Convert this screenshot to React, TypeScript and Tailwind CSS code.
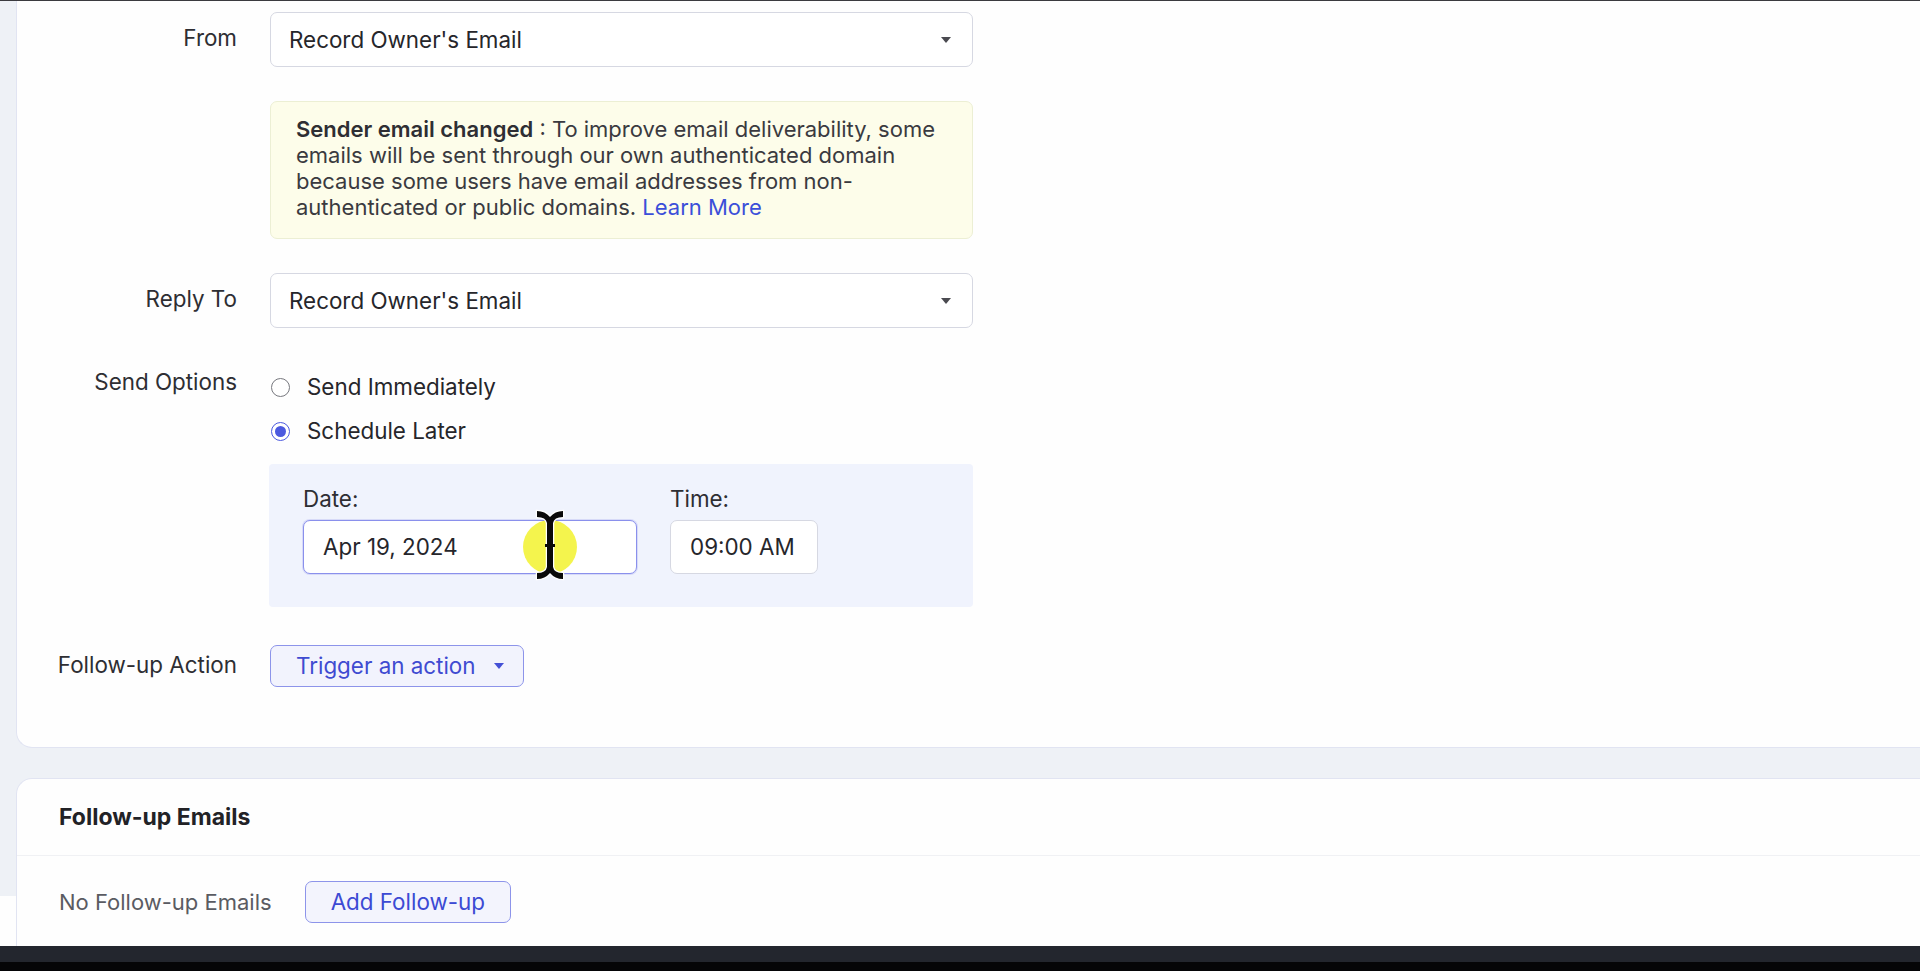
import React from "react"

function Caret({ className = "" }: { className?: string }) {
  return (
    <svg width="10" height="6" viewBox="0 0 10 6" className={className}>
      <path d="M0 0 L10 0 L5 6 Z" fill="currentColor" />
    </svg>
  )
}

function Row({ label, children, align = "center" }: { label?: string; children: React.ReactNode; align?: "center" | "start" }) {
  return (
    <div className={`flex ${align === "center" ? "items-center" : "items-start"}`}>
      <div
        className={`w-[220px] shrink-0 text-right text-[22.4px] leading-[30px] text-[#2e2e33] ${
          align === "start" ? "-mt-[5px]" : "-mt-[3px]"
        }`}
      >
        {label}
      </div>
      <div className="ml-[33px] w-[703px]">{children}</div>
    </div>
  )
}

function Select({ value }: { value: string }) {
  return (
    <div className="flex h-[55px] items-center justify-between rounded-[7px] border border-[#d6d8e2] bg-white pl-[18px] pr-[21px] text-[22.4px] text-[#26262b]">
      <span>{value}</span>
      <Caret className="text-[#4a4a50]" />
    </div>
  )
}

function Radio({ checked, label }: { checked?: boolean; label: string }) {
  return (
    <div className="flex h-[30px] items-center gap-[17px] text-[22.4px] text-[#26262b]">
      {checked ? (
        <span className="ml-px flex h-[19px] w-[19px] items-center justify-center rounded-full border-[1.5px] border-[#4b59df] bg-white">
          <span className="h-[11px] w-[11px] rounded-full bg-[#4b59df]" />
        </span>
      ) : (
        <span className="ml-px h-[19px] w-[19px] rounded-full border-[1.5px] border-[#77787e] bg-white" />
      )}
      <span>{label}</span>
    </div>
  )
}

export default function App() {
  return (
    <div className="relative flex h-[971px] w-[1920px] flex-col overflow-hidden bg-[#eef1f6] font-['Inter',sans-serif]">
      <div className="h-px shrink-0 bg-[#3b3b3f]" />

      <div className="flex-1 overflow-hidden pl-4">
        {/* Campaign settings card */}
        <div className="rounded-bl-[16px] border-b border-l border-[#e1e4f2] bg-[#fefefe] pb-[60px] pt-[11px]">
          <Row label="From">
            <Select value="Record Owner's Email" />
          </Row>

          <div className="mt-[34px]">
            <Row>
              <div className="rounded-[7px] border border-[#ecefd4] bg-[#fdfdea] pb-[18px] pl-[25px] pr-[14px] pt-[14px] text-[22px] leading-[26px] text-[#3a3a3f]">
                <span className="font-semibold text-[#2e2e33]">Sender email changed</span> : To improve email deliverability, some emails
                will be sent through our own authenticated domain because some users have email addresses from non-authenticated or
                public domains. <span className="text-[#3b4fd9]">Learn More</span>
              </div>
            </Row>
          </div>

          <div className="mt-[34px]">
            <Row label="Reply To">
              <Select value="Record Owner's Email" />
            </Row>
          </div>

          <div className="mt-[44px]">
            <Row label="Send Options" align="start">
              <div className="flex flex-col gap-[14px]">
                <Radio label="Send Immediately" />
                <Radio checked label="Schedule Later" />
              </div>
            </Row>
          </div>

          <div className="mt-[18px]">
            <Row>
              <div className="-ml-px flex gap-[33px] rounded-[4px] bg-[#f0f3fd] pb-[33px] pl-[34px] pt-[24px]">
                <div className="flex flex-col gap-[10px]">
                  <span className="text-[22.4px] leading-[22px] text-[#2e2e33]">Date:</span>
                  <div className="flex h-[54px] w-[334px] items-center rounded-[7px] border border-[#8a90ec] bg-white pl-[19px] text-[22.4px] text-[#26262b] shadow-[0_0_0_1px_rgba(138,144,236,0.25)]">
                    Apr 19, 2024
                  </div>
                </div>
                <div className="flex flex-col gap-[10px]">
                  <span className="text-[22.4px] leading-[22px] text-[#2e2e33]">Time:</span>
                  <div className="flex h-[54px] w-[148px] items-center rounded-[7px] border border-[#d6d8e2] bg-white pl-[19px] text-[22.4px] text-[#26262b]">
                    09:00 AM
                  </div>
                </div>
              </div>
            </Row>
          </div>

          <div className="mt-[38px]">
            <Row label="Follow-up Action">
              <button className="flex h-[42px] items-center gap-[18px] rounded-[7px] border border-[#8d94ea] bg-[#f2f3fd] pl-[25px] pr-[19px] text-[22.4px] text-[#3f4bd1]">
                Trigger an action
                <Caret className="text-[#4450d6]" />
              </button>
            </Row>
          </div>
        </div>

        {/* Follow-up emails card */}
        <div className="mt-[30px] h-[200px] rounded-l-[16px] border-l border-t border-[#e1e4f2] bg-[#fefefe]">
          <div className="flex h-[77px] items-center border-b border-[#f0f1f4] pl-[42px]">
            <h2 className="text-[23px] font-bold text-[#222226]">Follow-up Emails</h2>
          </div>
          <div className="flex items-center gap-[33px] pl-[42px] pt-[25px]">
            <span className="text-[22px] text-[#5a5b62]">No Follow-up Emails</span>
            <button className="flex h-[42px] items-center rounded-[7px] border border-[#8d94ea] bg-[#f3f4fd] px-[25px] text-[22.4px] text-[#3c4ad4]">
              Add Follow-up
            </button>
          </div>
        </div>
      </div>

      <div className="h-[16px] shrink-0 bg-[#23262e]" />
      <div className="h-[9px] shrink-0 bg-[#050507]" />

      {/* white strip left of the lower card */}
      <div className="absolute left-0 top-[896px] h-[50px] w-[16px] bg-[#fefefe]" />

      {/* mouse cursor highlight */}
      <div className="pointer-events-none absolute left-[523px] top-[520px] h-[54px] w-[54px] rounded-full bg-[#f3f33a]/90" />
      <svg className="pointer-events-none absolute left-[533px] top-[508px]" width="34" height="74" viewBox="0 0 34 74">
        <path
          d="M4 3 Q12 3 17 9 Q22 3 30 3 L30 9 Q21 9 20 15 L20 59 Q21 65 30 65 L30 71 Q22 71 17 65 Q12 71 4 71 L4 65 Q13 65 14 59 L14 15 Q13 9 4 9 Z"
          fill="#0a0a0a"
          stroke="#ffffff"
          strokeWidth="2.5"
          paintOrder="stroke"
        />
        <rect x="12" y="36" width="10" height="3" fill="#0a0a0a" />
      </svg>
    </div>
  )
}
